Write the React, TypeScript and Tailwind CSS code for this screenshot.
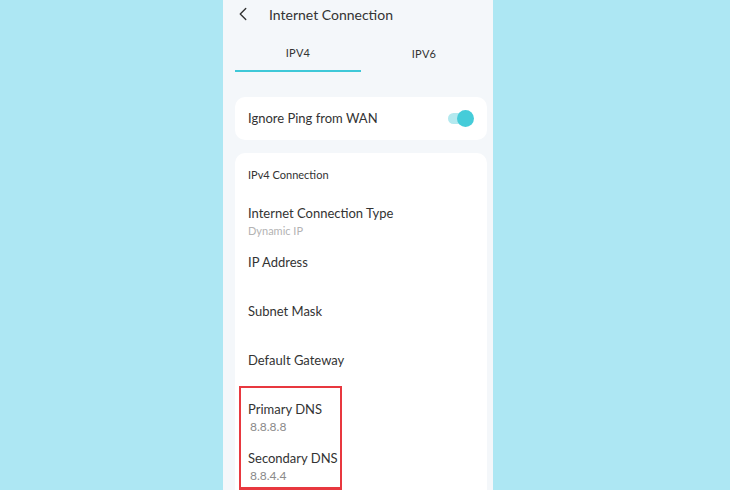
import { ChevronLeft } from 'lucide-react';

const rows = [
  { label: 'Internet Connection Type', value: 'Dynamic IP' },
  { label: 'IP Address', value: '' },
  { label: 'Subnet Mask', value: '' },
  { label: 'Default Gateway', value: '' },
  { label: 'Primary DNS', value: '8.8.8.8', dns: true },
  { label: 'Secondary DNS', value: '8.8.4.4', dns: true },
];

export default function App() {
  return (
    <div
      className="w-[730px] h-[490px] overflow-hidden bg-[#ade7f3] pl-[223px]"
      style={{ fontFamily: "'Lato', 'Noto Sans', sans-serif" }}
    >
      <div className="w-[270px] h-[490px] bg-[#f4f7fa] pl-3 pr-1.5">
        {/* header */}
        <div className="h-[28px] flex items-center">
          <ChevronLeft className="w-[22px] h-[22px] text-[#333] ml-[-3px]" strokeWidth={1.5} />
          <span className="ml-[15px] text-[14px] text-[#333]">Internet Connection</span>
        </div>

        {/* tabs */}
        <div className="mt-[8px] flex">
          <div className="flex-1 h-[36px] flex items-center justify-center border-b-2 border-[#3ec8d8] text-[11px] text-[#333] tracking-wide">
            IPV4
          </div>
          <div className="flex-1 h-[36px] flex items-center justify-center text-[11px] text-[#333] tracking-wide">
            IPV6
          </div>
        </div>

        {/* ping card */}
        <div className="mt-[25px] h-[43px] bg-white rounded-[10px] flex items-center justify-between pl-[13px] pr-[13px]">
          <span className="text-[13px] text-[#333]">Ignore Ping from WAN</span>
          <div className="relative w-[26px] h-[17px] flex items-center">
            <div className="w-[22px] h-[11px] rounded-full bg-[#b3e9ef]" />
            <div className="absolute right-0 top-0 w-[17px] h-[17px] rounded-full bg-[#45ccd9]" />
          </div>
        </div>

        {/* ipv4 card */}
        <div className="relative mt-[13px] bg-white rounded-t-[10px] h-[400px] pl-[13px]">
          <div className="h-[45px] pt-[14px] text-[11px] leading-[16px] text-[#333]">IPv4 Connection</div>
          {rows.map((r) => (
            <div key={r.label} className="h-[49px] pt-[6px]">
              <div className="text-[13px] leading-[18px] text-[#333]">{r.label}</div>
              <div
                className={
                  r.dns
                    ? 'pl-[2px] text-[12px] leading-[18px] text-[#8a8a8a]'
                    : 'text-[11px] leading-[18px] text-[#b3b3b3]'
                }
              >
                {r.value}
              </div>
            </div>
          ))}
          {/* annotation box */}
          <div className="absolute left-[4px] top-[233px] w-[103px] h-[104px] border-2 border-b-[3px] border-[#e8383f]" />
        </div>
      </div>
    </div>
  );
}
